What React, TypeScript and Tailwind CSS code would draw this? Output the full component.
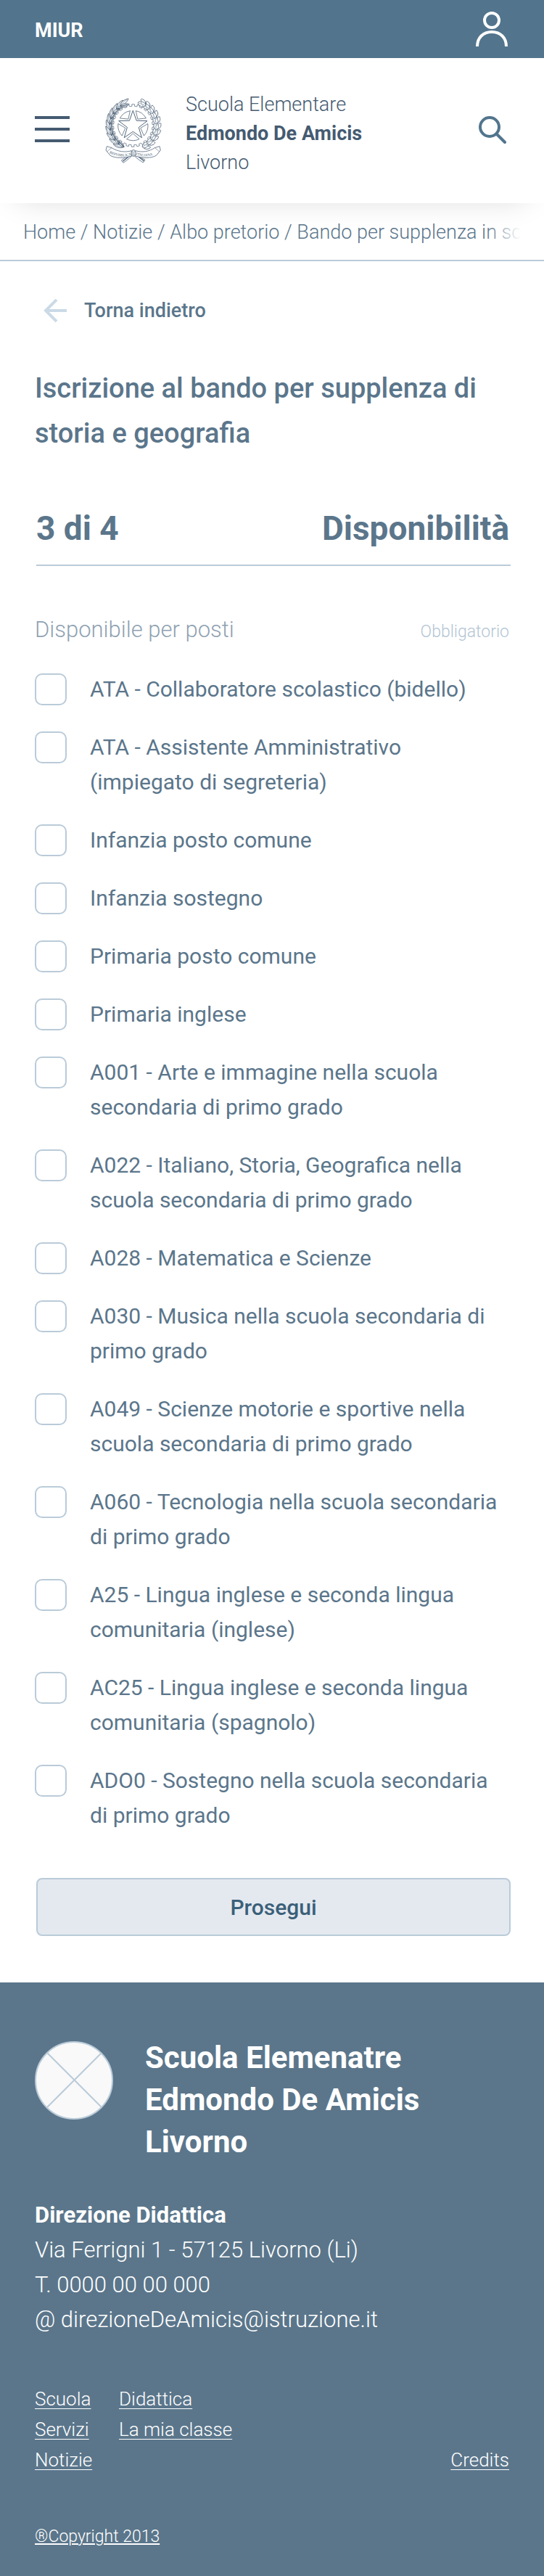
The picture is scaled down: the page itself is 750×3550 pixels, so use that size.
import type { ReactNode } from "react";

const posts: string[] = [
  "ATA - Collaboratore scolastico (bidello)",
  "ATA - Assistente Amministrativo (impiegato di segreteria)",
  "Infanzia posto comune",
  "Infanzia sostegno",
  "Primaria posto comune",
  "Primaria inglese",
  "A001 - Arte e immagine nella scuola secondaria di primo grado",
  "A022 - Italiano, Storia, Geografica nella scuola secondaria di primo grado",
  "A028 - Matematica e Scienze",
  "A030 - Musica nella scuola secondaria di primo grado",
  "A049 - Scienze motorie e sportive nella scuola secondaria di primo grado",
  "A060 - Tecnologia nella scuola secondaria di primo grado",
  "A25 - Lingua inglese e seconda lingua comunitaria (inglese)",
  "AC25 - Lingua inglese e seconda lingua comunitaria (spagnolo)",
  "ADO0 - Sostegno nella scuola secondaria di primo grado",
];

const CX = 118;
const CY = 114;

function polar(radius: number, degrees: number): string {
  const a = (degrees * Math.PI) / 180;
  return `${(CX + radius * Math.sin(a)).toFixed(1)} ${(CY - radius * Math.cos(a)).toFixed(1)}`;
}

// Cog wheel behind the star
const gear =
  "M" +
  Array.from({ length: 24 }, (_, i) => {
    const a = i * 15;
    return [polar(80, a - 7), polar(80, a - 3), polar(88, a - 3), polar(88, a + 4), polar(80, a + 5)].join(" L");
  }).join(" L") +
  " Z";

const star =
  "M" + Array.from({ length: 10 }, (_, i) => polar(i % 2 ? 25 : 62, i * 36)).join(" L") + " Z";

const spokes = [36, 108, 180, 252, 324].map(
  (a) => `M${polar(33, a)} L${polar(62, a - 25)} A62 62 0 0 1 ${polar(62, a + 25)} Z`,
);

const leafAngles = [-148, -134, -120, -106, -92, -78, -64, -50, -36, -24];

function Emblem() {
  return (
    <svg viewBox="0 0 240 270" className="h-[90px] w-20 shrink-0" fill="none" stroke="#455b71" strokeWidth="2.2" role="img" aria-label="Repubblica Italiana">
      <path d={gear} strokeWidth="2" />
      <path d={star} strokeWidth="2.8" />
      {spokes.map((d) => (
        <path key={d} d={d} />
      ))}
      {leafAngles.map((a) => {
        const [x, y] = polar(99, a).split(" ");
        return (
          <g key={a} transform={`translate(${x} ${y}) rotate(${a + 90})`}>
            <path d="M2 14 C-12 4 -14 -14 -10 -28 C0 -18 6 -4 2 14 Z" fill="#fff" />
            <path d="M4 16 C-2 2 4 -14 12 -22 C18 -8 14 6 4 16 Z" fill="#fff" />
            <path d="M4 16 C8 6 10 -6 11 -16" strokeWidth="3.5" />
            <path d="M1 10 C-4 -2 -8 -12 -9 -22" strokeWidth="1.4" />
          </g>
        );
      })}
      {leafAngles.map((a) => {
        const [x, y] = polar(99, -a).split(" ");
        return (
          <g key={a} transform={`translate(${x} ${y}) rotate(${-a - 90})`}>
            <path
              d="M-3 14 C-10 12 -9 5 -13 3 C-17 -1 -10 -5 -13 -9 C-14 -15 -6 -16 -3 -20 C1 -17 5 -15 3 -9 C9 -6 4 -1 7 3 C6 9 2 12 -3 14 Z"
              fill="#fff"
            />
            <path d="M4 12 C8 8 14 8 14 2 C19 -1 15 -7 17 -12 C12 -16 8 -12 6 -8" />
            <path d="M-3 14 L-4 -14 M-4 4 L-9 0 M-4 -3 L2 -6" strokeWidth="1.3" />
          </g>
        );
      })}
      <path d="M112 222 C96 238 84 248 70 258 L78 268 C96 256 112 242 124 228 Z" fill="#fff" />
      <path d="M124 222 C140 238 152 248 168 256 L160 267 C142 256 126 244 116 230 Z" fill="#fff" />
      <path d="M76 262 L118 228 M164 261 L122 227" strokeWidth="4" />
      <path d="M10 200 L30 206 C54 222 86 226 112 218 L112 240 C80 250 46 250 24 238 L6 216 Z" fill="#fff" />
      <path d="M228 200 L208 206 C186 222 154 226 128 218 L128 240 C158 250 192 250 214 238 L232 216 Z" fill="#fff" />
      <path d="M30 206 L10 222 M208 206 L228 222" strokeWidth="1.5" />
      <ellipse cx="120" cy="228" rx="9" ry="13" fill="#fff" />
      <path d="M116 218 C112 226 116 234 120 240 M124 218 C120 226 122 234 124 238" strokeWidth="2" />
      <defs>
        <path id="ribbon-left" d="M20 228 C50 244 84 245 112 235" />
        <path id="ribbon-right" d="M130 235 C158 245 190 243 220 228" />
      </defs>
      <g fill="#455b71" stroke="none" fontSize="15" fontFamily="Liberation Serif, serif">
        <text>
          <textPath href="#ribbon-left">REPVBBLICA</textPath>
        </text>
        <text>
          <textPath href="#ribbon-right">ITALIANA</textPath>
        </text>
      </g>
    </svg>
  );
}

function FooterLink({ children }: { children: ReactNode }) {
  return (
    <a href="#" className="underline decoration-1 underline-offset-4">
      {children}
    </a>
  );
}

export default function App() {
  return (
    <div className="min-h-screen bg-white font-['Roboto',sans-serif] font-light text-[#5b768b]">
      <div className="flex h-20 items-center justify-between bg-[#52758d] pr-[50px] pl-12 text-white">
        <a href="#" className="pt-1 text-[27px] leading-8 font-bold">
          MIUR
        </a>
        <button type="button" aria-label="Area personale">
          <svg viewBox="0 0 44 48" className="h-12 w-11" fill="none" stroke="currentColor" strokeWidth="4">
            <circle cx="22" cy="12" r="10" />
            <path d="M2 48 C2 36 10 28 22 28 S42 36 42 48" />
          </svg>
        </button>
      </div>

      <header className="relative z-10 flex items-center bg-white py-9 pr-[52px] pl-12 text-[#455b71] shadow-[0_16px_40px_-24px_rgba(0,0,0,0.18)]">
        <button type="button" aria-label="Menu" className="mr-12 pb-1">
          <svg viewBox="0 0 48 36" className="h-9 w-12" fill="currentColor">
            <path d="M0 0H48V4H0Z M0 16H48V20H0Z M0 32H48V36H0Z" />
          </svg>
        </button>
        <Emblem />
        <p className="ml-8 pt-2 text-[27px] leading-10">
          Scuola Elementare
          <br />
          <strong className="font-bold">Edmondo De Amicis</strong>
          <br />
          Livorno
        </p>
        <button type="button" aria-label="Cerca" className="ml-auto text-[#52758d]">
          <svg viewBox="0 0 38 40" className="h-10 w-[38px]" fill="none" stroke="currentColor" strokeWidth="4" strokeLinecap="round">
            <circle cx="15" cy="15" r="13" />
            <path d="M25 25 L36 36" />
          </svg>
        </button>
      </header>

      <nav aria-label="Percorso" className="border-b-2 border-[#bacbd9]">
        <div className="relative mr-8 overflow-hidden pt-5 pb-[18px] pl-8 text-[27px] leading-10 whitespace-nowrap">
          <a href="#">Home</a> / <a href="#">Notizie</a> / <a href="#">Albo pretorio</a> / <a href="#">Bando per supplenza in scuola</a>
          <span className="absolute inset-y-0 right-0 w-12 bg-linear-to-r from-white/0 to-white" />
        </div>
      </nav>

      <main className="px-12 pt-[52px] pb-16">
        <a href="#" className="flex items-center text-[27px] leading-8 font-medium">
          <svg viewBox="0 0 32 32" className="mr-6 ml-3 size-8" fill="none" stroke="#cbdae6" strokeWidth="4">
            <path d="M18 1 L3 16 L18 31 M3 16 H32" />
          </svg>
          Torna indietro
        </a>

        <h1 className="mt-[60px] text-[38px] leading-[62px] font-medium">Iscrizione al bando per supplenza di storia e geografia</h1>

        <div className="mt-[76px] -mr-0.5 ml-0.5 flex items-center justify-between border-b-2 border-[#bacbd9] pr-0.5 pb-[26px] text-[46px] leading-[48px] font-bold">
          <span>3 di 4</span>
          <h2>Disponibilità</h2>
        </div>

        <form onSubmit={(e) => e.preventDefault()}>
          <fieldset className="mt-16">
            <legend className="flex w-full items-baseline justify-between text-[31px] leading-[48px] text-[#8fa2b2]">
              Disponibile per posti
              <span className="text-[23px] leading-8 text-[#b3c5d4]">Obbligatorio</span>
            </legend>
            <div className="mt-[34px] flex flex-col gap-8">
              {posts.map((post) => (
                <label key={post} className="flex items-start gap-8 pr-3 text-[30px] leading-[48px] font-normal">
                  <input type="checkbox" className="mt-0.5 size-11 shrink-0 appearance-none rounded-[10px] border-2 border-[#bacbd9] bg-white checked:bg-[#52758d]" />
                  <span>{post}</span>
                </label>
              ))}
            </div>
          </fieldset>
          <div className="mt-[62px] -mr-0.5 ml-0.5 flex">
            <button type="submit" className="h-20 flex-1 rounded-lg border-2 border-[#bacbd9] bg-[#e4e9f0] text-[30px] font-medium text-[#3b5f79]">
              Prosegui
            </button>
          </div>
        </form>
      </main>

      <footer className="bg-[#5b768b] px-12 pt-[75px] pb-[38px] text-white">
        <div className="flex items-start gap-11">
          <svg viewBox="0 0 108 108" className="mt-1.5 size-[108px] shrink-0" fill="#f9f9f9" stroke="#bacbd9" strokeWidth="2" aria-hidden="true">
            <circle cx="54" cy="54" r="53" />
            <path d="M17 16 L92 91 M92 16 L17 91" />
          </svg>
          <p className="text-[42px] leading-[58px] font-bold">
            Scuola Elemenatre
            <br />
            Edmondo De Amicis
            <br />
            Livorno
          </p>
        </div>
        <address className="mt-12 text-[31px] leading-[48px] not-italic">
          <strong className="font-bold">Direzione Didattica</strong>
          <br />
          Via Ferrigni 1 - 57125 Livorno (Li)
          <br />
          T. 0000 00 00 000
          <br />
          @ direzioneDeAmicis@istruzione.it
        </address>
        <div className="mt-16 flex items-end justify-between text-[26px] leading-[42px]">
          <ul className="grid grid-cols-[116px_auto]">
            <li><FooterLink>Scuola</FooterLink></li>
            <li><FooterLink>Didattica</FooterLink></li>
            <li><FooterLink>Servizi</FooterLink></li>
            <li><FooterLink>La mia classe</FooterLink></li>
            <li><FooterLink>Notizie</FooterLink></li>
          </ul>
          <FooterLink>Credits</FooterLink>
        </div>
        <p className="mt-[69px] text-[23px] leading-8">
          <a href="#" className="underline decoration-2 underline-offset-2">®Copyright 2013</a>
        </p>
      </footer>
    </div>
  );
}
